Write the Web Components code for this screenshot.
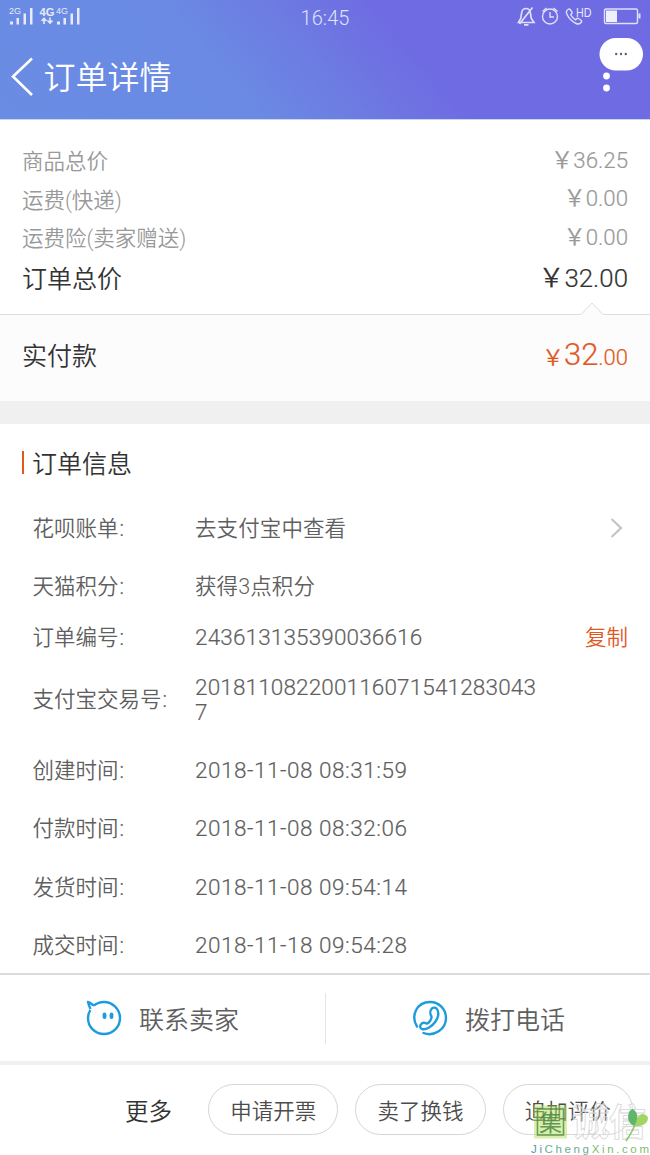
<!DOCTYPE html>
<html lang="zh-CN">
<head>
<meta charset="UTF-8">
<title>订单详情</title>
<style>
  body {
    margin: 0;
    width: 650px;
    height: 1155px;
    overflow: hidden;
    background: #fff;
    font-family: Roboto, "Noto Sans CJK SC", sans-serif;
    font-weight: 350;
    color: #5f5f5f;
  }
</style>
</head>
<body>
<order-page></order-page>

<script>
/**
 * Small helper: every element renders static markup into an open root
 */
class BaseElement extends HTMLElement {
  constructor() {
    super();
    this.attachShadow({ mode: 'open' });
  }

  connectedCallback() {
    this.shadowRoot.innerHTML = this.template();
  }
}

/**
 * Phone status bar: signals, clock, battery
 */
class StatusBar extends BaseElement {
  template() {
    return `
      <style>
        :host {
          display: grid;
          grid-template-columns: 1fr auto 1fr;
          align-items: start;
          height: 36px;
          color: #dfe3fb;
        }
        svg { display: block; }
        .right { justify-self: end; }
        .clock { font-size: 20px; line-height: 36px; letter-spacing: 0.1px; }
        text { fill: #e6eafc; font-family: "Liberation Sans", sans-serif; }
      </style>
      <svg width="90" height="36" viewBox="0 0 90 36">
        <text x="9" y="14" font-size="9" textLength="12" lengthAdjust="spacingAndGlyphs" font-weight="400">2G</text>
        <text x="39.5" y="16" font-size="11" font-weight="700" textLength="15" lengthAdjust="spacingAndGlyphs">4G</text>
        <text x="56" y="14" font-size="9" textLength="12" lengthAdjust="spacingAndGlyphs" font-weight="400">4G</text>
        <g fill="#e6eafc">
          <path d="M10 21.5h3v3h-3zM16.500 18h2.500v6.500h-2.500zM23.500 13.500h2.500v11h-2.500zM30 8h2.500v16.500h-2.500z"/>
          <path d="M57 21.5h3v3h-3zM63.500 18h2.500v6.500h-2.500zM70.500 13.500h2.500v11h-2.500zM77 8h2.500v16.500h-2.500z"/>
        </g>
        <g fill="none" stroke="#e6eafc" stroke-width="1.6">
          <path d="M44 24v-5.500M41.500 21l2.500-2.500 2.500 2.500M50 17.500v5.500M47.500 20.500l2.500 2.500 2.500-2.500"/>
        </g>
      </svg>
      <span class="clock">16:45</span>
      <svg class="right" width="140" height="36" viewBox="510 0 140 36" fill="none" stroke="#dfe0fb" stroke-width="1.4">
        <path d="M518.500 22.500h15.500l-2.700-4-1-6c-.4-2.700-1.800-4-4.300-4s-3.900 1.300-4.300 4l-1 6zM524 24.800h4.500" stroke-width="1.7"/>
        <path d="M532.500 7.500l-13 16.500" stroke-width="1.7"/>
        <circle cx="550" cy="16.5" r="7.5"/>
        <path d="M550 12v5h4M542.500 11.500l4-3.500M557.500 11.500l-4-3.500"/>
        <path d="M568 9.500c-1.500 1-2 3-1 5 2 4 5 7 9 9 2 1 4 .5 5.500-1.500.5-.7.2-1.300-.4-1.800l-2.600-1.700c-.7-.4-1.300-.3-1.800.3l-1 1c-2-1-4-3-5-5l1-1c.6-.6.6-1.100.3-1.800l-1.800-2.500c-.6-.8-1.400-.8-2.200 0z"/>
        <text x="576" y="17" font-size="12.5" font-weight="400" stroke="none" textLength="15.5" lengthAdjust="spacingAndGlyphs">HD</text>
        <rect x="604.5" y="9" width="33" height="14.5" rx="1.5"/>
        <path d="M639.500 13.500v5" stroke-width="2"/>
        <path d="M606 10.500h11v11.500h-11z" fill="#eff0fd" stroke="none"/>
      </svg>
    `;
  }
}
customElements.define('status-bar', StatusBar);

/**
 * Gradient header with back arrow and menu
 */
class PageHeader extends BaseElement {
  template() {
    return `
      <style>
        :host {
          display: block;
          position: relative;
          height: 119px;
          border-bottom: 1px solid #c9d7ee;
          background: linear-gradient(50deg, #6a8ce3 0%, #6a8ae3 35%, #6d7be2 49%, #6f6be2 63%, #6f6be2 100%);
        }
        .nav {
          display: flex;
          align-items: center;
          height: 83px;
          padding-left: 10px;
          color: #fff;
          font-size: 32px;
        }
        .nav svg { margin-right: 9.5px; }
        .title { line-height: 40px; }
        .menu { position: absolute; left: 598px; top: 36px; }
      </style>
      <status-bar></status-bar>
      <div class="nav">
        <svg width="24" height="42" viewBox="0 0 24 42" fill="none" stroke="#fff" stroke-width="2.6">
          <path d="M22 1.500L3 19.500 22 38"/>
        </svg>
        <span class="title"><slot></slot></span>
      </div>
      <svg class="menu" width="48" height="60" viewBox="598 36 48 60">
        <rect x="599.5" y="38" width="43.5" height="32.5" rx="16.25" fill="#fff"/>
        <g fill="#5a5f86">
          <circle cx="616.2" cy="54" r="1.2"/>
          <circle cx="621" cy="54" r="1.2"/>
          <circle cx="625.8" cy="54" r="1.2"/>
        </g>
        <circle cx="606.5" cy="76" r="3.4" fill="#fff"/>
        <circle cx="606.5" cy="88" r="3.4" fill="#fff"/>
      </svg>
    `;
  }
}
customElements.define('page-header', PageHeader);

/**
 * Label on the left, price on the right
 */
class PriceRow extends BaseElement {
  template() {
    return `
      <style>
        :host {
          display: flex;
          justify-content: space-between;
          align-items: center;
          height: 38.5px;
          padding: 0 22px;
          font-size: 21.5px;
          line-height: 30px;
          color: #999;
        }
        :host([total]) {
          height: 43px;
          font-size: 25px;
          color: #333;
        }
        .price {
          margin-top: -5px;
          font-size: 1.035em;
          -webkit-text-stroke: 0.2px;
        }
      </style>
      <span>${this.getAttribute('label')}</span>
      <span class="price"><slot></slot></span>
    `;
  }
}
customElements.define('price-row', PriceRow);

/**
 * Amount actually paid, with the notch pointing at the total
 */
class PaidRow extends BaseElement {
  template() {
    return `
      <style>
        :host {
          display: flex;
          justify-content: space-between;
          align-items: center;
          position: relative;
          box-sizing: border-box;
          height: 87px;
          padding: 0 22px 8px;
          border-top: 1px solid #ddd;
          background: #fcfcfc;
          font-size: 25px;
          color: #333;
        }
        .notch { position: absolute; left: 579px; top: -13px; }
        .price { font-size: 22px; color: #e2571e; -webkit-text-stroke: 0.2px; }
        b { font-size: 31px; font-weight: inherit; }
      </style>
      <svg class="notch" width="26" height="14" viewBox="0 0 26 14">
        <path d="M1 13L13 1l12 12v1H1z" fill="#fcfcfc"/>
        <path d="M0.500 12.500h1.500L13 1l11 11.500h1.500" fill="none" stroke="#ddd"/>
      </svg>
      <span>实付款</span>
      <span class="price">￥<b>32</b>.00</span>
    `;
  }
}
customElements.define('paid-row', PaidRow);

/**
 * One line of the order info list
 */
class InfoRow extends BaseElement {
  template() {
    const height = this.getAttribute('height') || '58.3';
    return `
      <style>
        :host {
          display: grid;
          grid-template-columns: 162.5px 345px 1fr;
          align-items: center;
          height: ${height}px;
          padding: 0 22px 0 32.5px;
          font-size: 21.5px;
          line-height: 25px;
        }
        .value {
          font-size: 22.5px;
          letter-spacing: 0.15px;
          overflow-wrap: anywhere;
          -webkit-text-stroke: 0.2px;
        }
        :host([cjk]) .value {
          font-size: 21.5px;
          letter-spacing: 0.1px;
          -webkit-text-stroke: 0;
        }
        :host([date]) .value { letter-spacing: 0.52px; }
        .extra { justify-self: end; color: #e2571e; }
        .colon { margin-left: 1px; -webkit-text-stroke: 0.3px; }
      </style>
      <span>${this.getAttribute('label')}<span class="colon">:</span></span>
      <span class="value"><slot></slot></span>
      <span class="extra"><slot name="extra"></slot></span>
    `;
  }
}
customElements.define('info-row', InfoRow);

class SectionTitle extends BaseElement {
  template() {
    return `
      <style>
        :host {
          display: flex;
          align-items: center;
          height: 76.5px;
          padding-left: 22px;
          font-size: 25px;
          color: #333;
        }
        i { width: 2px; height: 23px; margin-right: 8px; background: #e2571e; }
      </style>
      <i></i><slot></slot>
    `;
  }
}
customElements.define('section-title', SectionTitle);

class ContactBar extends BaseElement {
  template() {
    return `
      <style>
        :host {
          display: grid;
          grid-template-columns: 325px 1px 324px;
          align-items: center;
          box-sizing: border-box;
          height: 92px;
          border-top: 2px solid #dcdcdc;
          border-bottom: 4px solid #f0f0f0;
          background: #fff;
          font-size: 25px;
        }
        .item { display: flex; align-items: center; gap: 17px; padding-left: 86px; margin-top: -1px; }
        .split { height: 51px; background: #e4e4e4; }
      </style>
      <div class="item">
        <svg width="36" height="36" viewBox="0 0 36 36" fill="none" stroke="#1c9cdc" stroke-width="2.4" stroke-linejoin="round">
          <path d="M8 5.500C5.500 4.500 4.500 2.500 2 2c.5 2 1 4 2.500 7M8 5.500C11 3 14.500 2 18 2c8.500 0 16 7 16 16s-7 16-16 16S2 27 2 18c0-3 .8-5.500 2.300-8"/>
          <path d="M18.500 14.500v2.500M25.500 14.500v2.500" stroke-width="3.8" stroke-linecap="round"/>
        </svg>
        <span>联系卖家</span>
      </div>
      <div class="split"></div>
      <div class="item">
        <svg width="36" height="36" viewBox="0 0 36 36" fill="none" stroke="#1c9cdc" stroke-width="2.4" stroke-linecap="round">
          <path d="M5 26.500C-1.500 16 4.500 2 18 2c9 0 16 7 16 16 0 11.500-12 19-22.500 15"/>
          <path d="M19.500 9c1-1.500 3.500-2 5-.5 3 3 2 9-1 13-3.500 5-9 8.500-13.500 7.500-2-.5-2.500-3-1-4.700 1.200-1.500 3.500-1.800 5-1 1.500.7 2.500 0 4-2.300 1.500-2.200 2.200-3.800 1-5.500-1-1.800-.8-5 .5-6.500z"/>
        </svg>
        <span>拨打电话</span>
      </div>
    `;
  }
}
customElements.define('contact-bar', ContactBar);

class ActionBar extends BaseElement {
  template() {
    return `
      <style>
        :host {
          display: flex;
          align-items: center;
          gap: 17px;
          box-sizing: border-box;
          height: 90px;
          padding: 0 0 1px 125px;
          background: #fff;
        }
        .more { width: 66px; font-size: 23.5px; color: #333; }
      </style>
      <span class="more">更多</span>
      <pill-button>申请开票</pill-button>
      <pill-button>卖了换钱</pill-button>
      <pill-button>追加评价</pill-button>
    `;
  }
}
customElements.define('action-bar', ActionBar);

class PillButton extends BaseElement {
  template() {
    return `
      <style>
        :host {
          display: flex;
          align-items: center;
          justify-content: center;
          box-sizing: border-box;
          width: 130.3px;
          height: 51px;
          border: 1px solid #d6d6d6;
          border-radius: 26px;
          font-size: 21.5px;
          color: #4c4c4c;
        }
      </style>
      <slot></slot>
    `;
  }
}
customElements.define('pill-button', PillButton);

/**
 * Site mark laid over the bottom right corner
 */
class SiteMark extends BaseElement {
  template() {
    return `
      <style>
        :host { position: absolute; left: 526px; top: 1080px; }
        svg { display: block; }
        text { font-family: "Noto Sans CJK SC", sans-serif; }
      </style>
      <svg width="124" height="75" viewBox="526 1080 124 75">
        <rect x="534" y="1105.5" width="33" height="33" fill="#b5e05c" opacity="0.5"/>
        <rect x="537.5" y="1109" width="26" height="26" fill="none" stroke="#4c8a45" stroke-width="1.6" opacity="0.8"/>
        <text x="539" y="1131" font-size="23" font-weight="400" fill="#4c8a45" opacity="0.85">集</text>
        <text x="572" y="1136" font-size="37" font-weight="700" fill="#fff" fill-opacity="0.3" stroke="#d6d6d6" stroke-width="0.8">诚信</text>
        <path d="M626 1141c4-6 7-10 9-17" fill="none" stroke="#8cc56a" stroke-width="1.5"/>
        <path d="M634 1126c1-6 3-10 8-12 3 0 5 1 6 4 0 6-7 9-14 8z" fill="#a3d565"/>
        <path d="M634 1126c-6-3-7-8-5-14 1-2 3-3 4-3 6 4 5 11 1 17z" fill="#60b56c"/>
        <text x="531" y="1152.5" font-size="11.5" font-weight="400" textLength="118" style="font-family: 'Liberation Sans', sans-serif"><tspan fill="#4f9ca8">Ji</tspan><tspan fill="#64ae9c">Cheng</tspan><tspan fill="#7fba6e">Xin.com</tspan></text>
      </svg>
    `;
  }
}
customElements.define('site-mark', SiteMark);

class OrderPage extends BaseElement {
  template() {
    return `
      <style>
        :host { display: flex; flex-direction: column; height: 1155px; }
        .prices { box-sizing: border-box; height: 194px; padding-top: 23px; }
        .gap { height: 23px; background: #f0f0f0; }
        .info { height: 549px; overflow: hidden; }
        .arrow { display: block; margin: -2px 5px 0 0; }
      </style>
      <page-header>订单详情</page-header>
      <div class="prices">
        <price-row label="商品总价">￥36.25</price-row>
        <price-row label="运费(快递)">￥0.00</price-row>
        <price-row label="运费险(卖家赠送)">￥0.00</price-row>
        <price-row total label="订单总价">￥32.00</price-row>
      </div>
      <paid-row></paid-row>
      <div class="gap"></div>
      <div class="info">
        <section-title>订单信息</section-title>
        <info-row cjk height="56" label="花呗账单">去支付宝中查看
          <svg slot="extra" class="arrow" width="13" height="22" viewBox="0 0 13 22" fill="none" stroke="#c4c4c4" stroke-width="2.2">
            <path d="M1.500 2l9.500 9-9.500 9"/>
          </svg>
        </info-row>
        <info-row cjk height="60" label="天猫积分">获得3点积分</info-row>
        <info-row height="41" label="订单编号">243613135390036616<span slot="extra">复制</span></info-row>
        <info-row height="84" label="支付宝交易号">2018110822001160715412830437</info-row>
        <info-row date label="创建时间">2018-11-08 08:31:59</info-row>
        <info-row date label="付款时间">2018-11-08 08:32:06</info-row>
        <info-row date label="发货时间">2018-11-08 09:54:14</info-row>
        <info-row date label="成交时间">2018-11-18 09:54:28</info-row>
      </div>
      <contact-bar></contact-bar>
      <action-bar></action-bar>
      <site-mark></site-mark>
    `;
  }
}
customElements.define('order-page', OrderPage);
</script>
</body>
</html>
